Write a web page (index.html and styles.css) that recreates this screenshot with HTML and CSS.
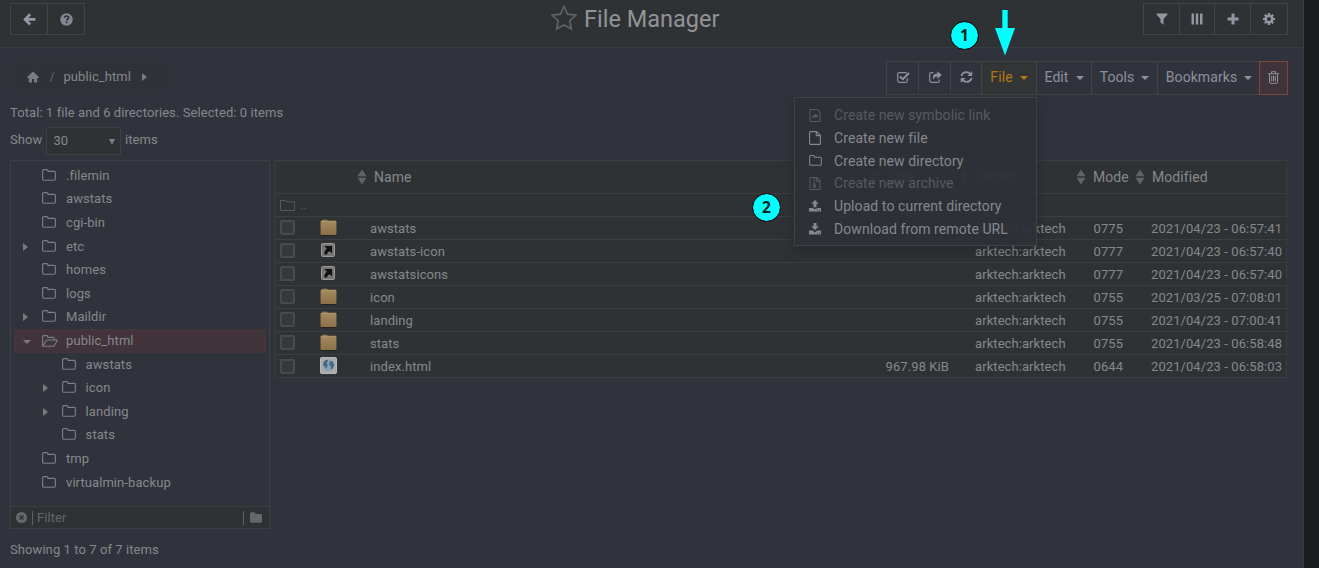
FILE: index.html
```html
<!DOCTYPE html>
<html lang="en">
<head>
<meta charset="utf-8">
<title>File Manager</title>
<link rel="stylesheet" href="styles.css">
</head>
<body>
<svg class="defs" width="0" height="0">
  <symbol id="folder" viewBox="0 0 14 12"><path d="M.6 9.8V2.1Q.6.6 2 .6h2.6Q6 .6 6 2v.4h6q1.4 0 1.4 1.4v6q0 1.5-1.4 1.5H2Q.6 11.300.6 9.800z" fill="none" stroke="currentColor" stroke-width="1.1"/></symbol>
  <symbol id="folder-open" viewBox="0 0 16 12"><path d="M.6 10V2Q.6.6 2 .6h2.500Q5.900.6 5.900 2v.4h5Q12.300 2.400 12.300 3.800v1M1 10.800l3.100-5q.5-.8 1.500-.8h9.200q.9 0 .4.8l-2.700 4.500q-.6 1-1.600 1H1.700Q.6 11.300.6 10" fill="none" stroke="currentColor" stroke-width="1.1"/></symbol>
  <symbol id="file" viewBox="0 0 12 14"><path d="M.6 1.300Q.6.6 1.300.6h6.200l3.900 3.900v8.200q0 .7-.7.700H1.300Q.6 13.400.6 12.700zM7.300.6v4h4.100" fill="none" stroke="currentColor" stroke-width="1.100"/></symbol>
  <symbol id="filelink" viewBox="0 0 12 14"><path d="M.6 1.300Q.6.6 1.300.6h7.200l2.900 2.900v9.200q0 .7-.7.700H1.300Q.6 13.400.6 12.700z" fill="none" stroke="currentColor" stroke-width="1.100"/><path d="M2.700 10.300q0-4.100 3.500-4.100V4.800l3.500 2.700-3.500 2.600V8.500q-2 0-3.500 1.800z" fill="currentColor"/></symbol>
  <symbol id="filezip" viewBox="0 0 12 14"><path d="M.6 1.300Q.6.6 1.300.6h6.700l3.400 3.400v8.700q0 .7-.7.700H1.300Q.6 13.400.6 12.700zM7.700.6v3.900h3.700" fill="none" stroke="currentColor" stroke-width="1.100"/><path d="M4 1h1.300v1H4zm1.300 1h1.300v1H5.300zM4 3h1.300v1H4zm1.300 1h1.300v1H5.300zM4 5h1.300v1H4z" fill="currentColor"/><path d="M4.500 6.500h1.600l1 3.600q0 1.700-1.800 1.700t-1.800-1.700zM4.700 9.300v1h1.300v-1z" fill="currentColor" fill-rule="evenodd"/></symbol>
  <symbol id="upload" viewBox="0 0 12 12"><path d="M6 0l3.700 3.800H7.500v3.400h-3V3.800H2.300z" fill="currentColor"/><path d="M0 8h3.800q.3 1 2.200 1t2.200-1H12v3.600H0zM8.400 9.800v.8h.8v-.8zm1.700 0v.8h.8v-.8z" fill="currentColor" fill-rule="evenodd"/></symbol>
  <symbol id="download" viewBox="0 0 12 12"><path d="M4.500 0h3v3.300h2.300L6 7.300 2.200 3.300h2.300z" fill="currentColor"/><path d="M0 7.600h3.700L6 9.600l2.300-2H12v4H0zM8.400 9.800v.8h.8v-.8zm1.700 0v.8h.8v-.8z" fill="currentColor" fill-rule="evenodd"/></symbol>
  <symbol id="sort" viewBox="0 0 10 16"><path d="M5 .5L9.500 7.200H.5zM.5 8.800h9L5 15.500z" fill="currentColor"/></symbol>
  <symbol id="bigfolder" viewBox="0 0 17 17"><path d="M1 2.500Q1 .5 2.500.5h4q1 0 1.500 1h7.500q1 0 1 1V16q0 .7-.7.700H1.400Q.5 16.700.5 16V2.500z" fill="#211f1b"/><path d="M2 2V1q0-.5.7-.5h4Q7.500.5 8 2z" fill="#85683d"/><rect x=".5" y="1.800" width="16" height="14.200" rx="1" fill="url(#tan)"/><path d="M1 2.300h15" stroke="#b39b73" stroke-width=".7"/></symbol>
  <linearGradient id="tan" x1="0" y1="0" x2="0" y2="1"><stop offset="0" stop-color="#a58b62"/><stop offset="1" stop-color="#8c7048"/></linearGradient>
  <symbol id="shortcut" viewBox="0 0 14 14"><rect x=".5" y=".5" width="13" height="13" rx="1" fill="#777" stroke="#999"/><path d="M3.300 3h7.800v7.500L8.700 8.200q-2.400.6-2.700 3.200H3.500q-.9-3 2.400-5.600z" fill="#111"/></symbol>
  <symbol id="globe" viewBox="0 0 17 17"><rect x=".5" y=".5" width="16" height="16" rx="1" fill="#aaa" stroke="#b8b8b8"/><circle cx="8.500" cy="8.300" r="5.800" fill="#87a0b3"/><path d="M3.500 5.200Q5.200 2.700 8 2.800L7.600 4.600 6.300 6l1.300 1.300-.3 1.600-1 2.800L4.900 9.500 3.200 7.900zM10 4l2.600.500 1.500 3-1 3.400-2.300 1.700.3-3.300L9.300 8l.2-2z" fill="#456587"/></symbol>
</svg>

<main class="page">
  <header class="header">
    <div class="group">
      <button class="btn back"><svg width="13" height="13" viewBox="0 0 13 13"><path d="M7.200 1.300L2.100 6.400l5.100 5.100M2.500 6.400h10" fill="none" stroke="currentColor" stroke-width="2.700"/></svg></button>
      <button class="btn help"><svg width="13" height="13" viewBox="0 0 13 13"><circle cx="6.500" cy="6.500" r="6.200" fill="currentColor"/><path d="M4.300 4.700Q4.700 3 6.600 3q2 0 2 1.700 0 1-1.100 1.600-.9.500-.9 1.300M6.600 8.600v1.600" fill="none" stroke="#2f3235" stroke-width="1.700"/></svg></button>
    </div>
    <h1 class="title"><svg width="26" height="26" viewBox="0 0 26 26"><path d="M13 1.500l3.500 7.600 8.300 1-6.100 5.600 1.600 8.200L13 19.900l-7.300 4 1.600-8.200L1.200 10.100l8.300-1z" fill="none" stroke="#606264" stroke-width="1.700"/></svg><span>File Manager</span></h1>
    <div class="group actions">
      <button class="btn"><svg width="12" height="12" viewBox="0 0 12 12"><path d="M.5.500h11v1L7.500 6v5.800l-3-2.400V6L.5 1.500z" fill="currentColor"/></svg></button>
      <button class="btn"><svg width="12" height="12" viewBox="0 0 12 12"><path d="M.5.500H3v11H.5zM4.800.500h2.400v11H4.800zM9 .500h2.500v11H9z" fill="currentColor"/></svg></button>
      <button class="btn"><svg width="12" height="12" viewBox="0 0 12 12"><path d="M6 .5v11M.5 6h11" stroke="currentColor" stroke-width="3"/></svg></button>
      <button class="btn"><svg width="12" height="12" viewBox="0 0 12 12"><circle cx="6" cy="6" r="3.300" fill="none" stroke="currentColor" stroke-width="2.600"/><path d="M6 0v2M6 10v2M0 6h2M10 6h2M1.800 1.800l1.400 1.400M8.800 8.800l1.400 1.400M1.800 10.200l1.400-1.400M8.800 3.200l1.400-1.400" stroke="currentColor" stroke-width="2.200"/></svg></button>
    </div>
  </header>

  <div class="topbar">
    <nav class="crumbs"><svg width="12" height="12" viewBox="0 0 13 12"><path d="M6.500 0L13 6.200l-.8.800H11v5H7.700V8.200H5.300V12H2V7H.8L0 6.200z" fill="currentColor"/></svg><span class="slash">/</span><span>public_html</span><i class="tri right"></i></nav>
    <div class="toolbar">
      <button class="tool t1"><svg width="13" height="12" viewBox="0 0 13 12"><path d="M10.300 7v2.800q0 1.500-1.500 1.500H2.200Q.7 11.300.7 9.800V3.200q0-1.500 1.500-1.500h6.600l1 .3" fill="none" stroke="currentColor" stroke-width="1.200"/><path d="M3 5.500l2.800 2.700L12 2" fill="none" stroke="currentColor" stroke-width="2"/></svg></button>
      <button class="tool t2"><svg width="13" height="12" viewBox="0 0 13 12"><path d="M4.500 1.700H2.200Q.7 1.700.7 3.200v6.600q0 1.500 1.500 1.500h6.600q1.500 0 1.500-1.500V8.500" fill="none" stroke="currentColor" stroke-width="1.200"/><path d="M8.300.2l4.500 3.900-4.500 3.800V5.600q-3.500-.2-3.300 3.100-1.900-2.200-.8-4.200 1-2 4.100-2z" fill="currentColor"/></svg></button>
      <button class="tool t3"><svg width="13" height="12" viewBox="0 0 13 12"><path d="M1.500 5Q2.300 1.400 6.400 1.200q2.500 0 4.200 2M11.500 7Q10.700 10.600 6.600 10.800q-2.500 0-4.200-2" fill="none" stroke="currentColor" stroke-width="1.800"/><path d="M12.200 0v5H7.500zM.8 12V7h4.700z" fill="currentColor"/></svg></button>
      <button class="tool t4">File<i class="tri down"></i></button>
      <button class="tool t5">Edit<i class="tri down"></i></button>
      <button class="tool t6">Tools<i class="tri down"></i></button>
      <button class="tool t7">Bookmarks<i class="tri down"></i></button>
      <button class="tool t8"><svg width="11" height="13" viewBox="0 0 11 13"><path d="M0 2.700h11M3.500 2.500V.7h4v1.800M1.500 3v8.200q0 1.200 1.200 1.200h5.600q1.200 0 1.200-1.200V3M3.700 4.700v5.800M5.500 4.700v5.800M7.300 4.700v5.800" fill="none" stroke="currentColor" stroke-width="1"/></svg></button>
      <div class="menu">
        <div class="item off"><svg class="ic" width="12" height="13"><use href="#filelink"/></svg>Create new symbolic link</div>
        <div class="item"><svg class="ic" width="12" height="14"><use href="#file"/></svg>Create new file</div>
        <div class="item"><svg class="ic" width="13" height="11"><use href="#folder"/></svg>Create new directory</div>
        <div class="item off"><svg class="ic" width="12" height="13"><use href="#filezip"/></svg>Create new archive</div>
        <div class="item"><svg class="ic" width="12" height="12"><use href="#upload"/></svg>Upload to current directory</div>
        <div class="item"><svg class="ic" width="12" height="12"><use href="#download"/></svg>Download from remote URL</div>
      </div>
    </div>
  </div>

  <p class="total">Total: 1 file and 6 directories. Selected: 0 items</p>
  <div class="show"><span>Show</span><div class="select"><span>30</span><i class="tri drop"></i></div><span>items</span></div>

  <div class="content">
    <aside class="side">
      <div class="tree">
        <div class="node"><i></i><svg class="fo"><use href="#folder"/></svg>.filemin</div>
        <div class="node"><i></i><svg class="fo"><use href="#folder"/></svg>awstats</div>
        <div class="node"><i></i><svg class="fo"><use href="#folder"/></svg>cgi-bin</div>
        <div class="node"><i class="tri right"></i><svg class="fo"><use href="#folder"/></svg>etc</div>
        <div class="node"><i></i><svg class="fo"><use href="#folder"/></svg>homes</div>
        <div class="node"><i></i><svg class="fo"><use href="#folder"/></svg>logs</div>
        <div class="node"><i class="tri right"></i><svg class="fo"><use href="#folder"/></svg>Maildir</div>
        <div class="node sel"><i class="tri down"></i><svg class="fo open"><use href="#folder-open"/></svg>public_html</div>
        <div class="node sub"><i></i><svg class="fo"><use href="#folder"/></svg>awstats</div>
        <div class="node sub"><i class="tri right"></i><svg class="fo"><use href="#folder"/></svg>icon</div>
        <div class="node sub"><i class="tri right"></i><svg class="fo"><use href="#folder"/></svg>landing</div>
        <div class="node sub"><i></i><svg class="fo"><use href="#folder"/></svg>stats</div>
        <div class="node"><i></i><svg class="fo"><use href="#folder"/></svg>tmp</div>
        <div class="node"><i></i><svg class="fo"><use href="#folder"/></svg>virtualmin-backup</div>
      </div>
      <div class="filter"><svg width="11" height="11" viewBox="0 0 11 11"><circle cx="5.500" cy="5.500" r="5.500" fill="currentColor"/><path d="M3.500 3.500l4 4M7.500 3.500l-4 4" stroke="#2f3235" stroke-width="1.500"/></svg><span class="field">Filter</span><svg width="12" height="11" viewBox="0 0 12 11"><path d="M0 1.500Q0 .3 1.300.3h2.900q1.200 0 1.200 1.200v.4h5.200Q12 1.900 12 3.200v6.100q0 1.400-1.400 1.400H1.400Q0 10.700 0 9.300z" fill="currentColor"/></svg></div>
    </aside>

    <section class="list">
      <div class="row head"><span></span><span></span><span class="h name"><svg class="sort"><use href="#sort"/></svg>Name</span><span class="h size"><svg class="sort"><use href="#sort"/></svg>Size</span><span class="h owner"><svg class="sort"><use href="#sort"/></svg>Owner</span><span class="h mode"><svg class="sort"><use href="#sort"/></svg>Mode</span><span class="h mod"><svg class="sort"><use href="#sort"/></svg>Modified</span></div>
      <div class="row up"><span class="parent"><svg width="15" height="11" viewBox="0 0 15 11"><path d="M.5.500h5l1 1.300h8v8.700H.5z" fill="none" stroke="currentColor"/></svg>..</span></div>
      <div class="row"><b class="cb"></b><svg class="fi"><use href="#bigfolder"/></svg><span>awstats</span><span class="sz"></span><span>arktech:arktech</span><span>0775</span><span>2021/04/23 - 06:57:41</span></div>
      <div class="row"><b class="cb"></b><svg class="fi sm"><use href="#shortcut"/></svg><span>awstats-icon</span><span class="sz"></span><span>arktech:arktech</span><span>0777</span><span>2021/04/23 - 06:57:40</span></div>
      <div class="row"><b class="cb"></b><svg class="fi sm"><use href="#shortcut"/></svg><span>awstatsicons</span><span class="sz"></span><span>arktech:arktech</span><span>0777</span><span>2021/04/23 - 06:57:40</span></div>
      <div class="row"><b class="cb"></b><svg class="fi"><use href="#bigfolder"/></svg><span>icon</span><span class="sz"></span><span>arktech:arktech</span><span>0755</span><span>2021/03/25 - 07:08:01</span></div>
      <div class="row"><b class="cb"></b><svg class="fi"><use href="#bigfolder"/></svg><span>landing</span><span class="sz"></span><span>arktech:arktech</span><span>0755</span><span>2021/04/23 - 07:00:41</span></div>
      <div class="row"><b class="cb"></b><svg class="fi"><use href="#bigfolder"/></svg><span>stats</span><span class="sz"></span><span>arktech:arktech</span><span>0755</span><span>2021/04/23 - 06:58:48</span></div>
      <div class="row"><b class="cb"></b><svg class="fi"><use href="#globe"/></svg><span>index.html</span><span class="sz">967.98 KiB</span><span>arktech:arktech</span><span>0644</span><span>2021/04/23 - 06:58:03</span></div>
    </section>
  </div>
  <p class="showing">Showing 1 to 7 of 7 items</p>
</main>

<div class="marker one">1</div>
<div class="marker two">2</div>
<svg class="arrow" width="20" height="46" viewBox="0 0 20 46"><path d="M7.300 0h5.400v18H20L10 45.500 0 18h7.300z" fill="#0ff"/></svg>
</body>
</html>
```
FILE: styles.css
```css
* { box-sizing: border-box; }
body { margin: 0; height: 568px; overflow: hidden; background: #1b1c20; color: #85888b; font: 13px/20px Roboto, sans-serif; letter-spacing: .08px; }
.defs { position: absolute; }
svg { display: block; flex: none; }
p, h1 { margin: 0; font-weight: 400; }
button { font: inherit; letter-spacing: inherit; color: inherit; background: none; border: 0; padding: 0; margin: 0; }
.page { width: 1304px; height: 568px; background: #30333c; border-right: 1px solid #3b3d41; }
.header { height: 48px; background: #2f3235; border-bottom: 1px solid #3a3c3e; display: grid; grid-template-columns: 1fr auto 1fr; padding: 3px 15px 0 10px; }
.group { display: flex; height: 32px; border: 1px solid #414447; justify-self: start; color: #9496a1; }
.actions { justify-self: end; }
.btn { width: 36px; display: flex; align-items: center; justify-content: center; border-left: 1px solid #414447; }
.btn:first-child { border-left: 0; }
.actions .btn:first-child { width: 35px; }
.actions .btn:nth-child(3) { width: 36px; }
.actions .btn:nth-child(2) { width: 35px; padding-right: 1px; }
.actions .btn:last-child { width: 37px; padding-right: 1px; }
.back { width: 36px; }
.help { width: 37px; color: #858793; }
.title { display: flex; gap: 7.5px; font-size: 23.5px; line-height: 32px; letter-spacing: 0; color: #929496; margin-left: -28px; }
.title svg { margin-top: 2px; }
.topbar { display: flex; justify-content: space-between; padding: 13px 15px 0 10px; height: 54px; }
.crumbs { display: flex; align-items: center; width: 160px; height: 31px; background: #2f3238; padding-left: 17px; }
.crumbs span { margin-right: 11px; }
.crumbs .slash { margin: 0 8.5px 0 11px; color: #66696c; }
.crumbs svg { color: #797e80; margin-left: -.5px; }
.tri { width: 0; height: 0; border: 4px solid transparent; flex: none; }
.tri.right { border-left: 5px solid #777b7e; border-right: 0; }
.tri.down { border-top: 4px solid currentColor; border-bottom: 0; }
.toolbar { position: relative; display: flex; height: 34px; font-size: 14px; letter-spacing: .08px; color: #8e919b; }
.tool { border: 1px solid #414447; border-right: 0; display: flex; align-items: center; justify-content: center; gap: 7px; padding-bottom: 2px; }
.tool .tri { margin-top: 2px; }
.t1, .t2 { width: 32px; padding-left: 1px; }
.t3 { width: 31px; }
.t4 { width: 55px; color: #b4780e; background: #333436; }
.t5 { width: 55px; }
.t6 { width: 66px; }
.t7 { width: 102px; padding-left: 1px; }
.t8 { width: 29px; border: 1px solid #82423d; background: #3e3439; }
.menu { position: absolute; z-index: 2; left: -92px; top: 36px; width: 243px; height: 149px; padding-top: 6px; background: rgba(46, 48, 56, .95); border: 1px solid #3f4143; box-shadow: 0 6px 12px rgba(0, 0, 0, .18); color: #85888c; }
.item { display: grid; grid-template-columns: 25px 1fr; align-items: center; height: 22.7px; padding-left: 14px; white-space: nowrap; }
.off { color: #575a60; }
.total { padding: 1px 0 0 10px; }
.show { display: flex; align-items: center; height: 28px; padding-left: 10px; margin-top: 4px; }
.show > span { margin-top: -3px; }
.select { display: flex; align-items: center; justify-content: space-between; width: 75px; height: 28px; margin: 0 3.5px 0 4px; padding: 0 5px 0 6px; border: 1px solid #3d4043; background: #2f3235; }
.drop { border-width: 6px 3px 0; border-top-color: #7c7e7f; margin-top: 2px; }
.content { display: flex; align-items: flex-start; gap: 5px; padding-left: 10px; margin-top: 5px; }
.side { width: 260px; height: 369px; border: 1px solid #3c3f43; display: flex; flex-direction: column; }
.tree { flex: 1; padding: 3px 3px 0; }
.node { display: flex; align-items: center; height: 23.6px; }
.node > i:first-child { width: 0; margin: 2px 17px 0 9px; }
.node > i.right { width: 5px; margin-top: 0; margin-right: 14px; }
.node > i:first-child:not(.tri) { width: 5px; margin-right: 14px; }
.node > i.down { width: 8px; margin-right: 11px; }
.sub { padding-left: 19.6px; }
.fo { width: 14px; height: 12px; margin: -2px 10px 0 0; color: #7c8084; }
.fo.open { width: 16px; margin: 0 8px 0 0; }
.sel { background: #41343b; }
.sel .tri { color: #787b7e; }
.filter { display: flex; align-items: center; height: 22px; border-top: 1px solid #3c3f42; background: #2f3235; color: #65686a; padding: 0 7px 0 5px; }
.field { flex: 1; height: 14px; line-height: 13px; margin: 0 6px 0 5px; padding-left: 4px; border: solid #5d6061; border-width: 0 1px; }
.list { width: 1012px; height: 218px; border: 1px solid #3b3d41; background: #2f3235; }
.row { display: grid; grid-template-columns: 44px 50px 505px 100px 118.500px 57.500px 1fr; align-items: center; height: 23px; border-bottom: 1px solid #3b3e40; white-space: nowrap; }
.row > span { padding-top: 2px; }
.row:last-child { border-bottom: 0; }
.row:last-child > span { padding-top: 1px; }
.head { height: 33px; font-size: 14px; }
.head > span { padding-top: 0; }
.up > .parent { padding-top: 0; }
.h { display: flex; align-items: center; }
.sort { width: 10px; height: 16px; margin-right: 7px; color: #606264; }
.name { margin-left: -13px; }
.size { margin-left: -5px; }
.owner { margin-left: -16px; }
.mode { margin-left: -17.500px; }
.mod { margin-left: -16px; }
.parent { display: flex; align-items: center; gap: 5px; padding-left: 4px; color: #55585a; grid-column: 1 / 4; }
.cb { width: 15px; height: 15px; margin: -1px 0 0 4px; border: 2px solid #484b4d; border-radius: 2px; background: #36393c; }
.fi { width: 17px; height: 17px; margin: -2px 0 0 -.5px; }
.fi.sm { width: 14px; height: 14px; margin-left: 1px; }
.row:last-child .fi { margin-top: -3px; }
.sz { text-align: right; padding-right: 26px; }
.showing { padding: 11px 0 0 10px; }
.marker { position: absolute; z-index: 3; width: 29px; height: 29px; border: 1px solid #04100f; border-radius: 50%; background: #0ff; background-clip: padding-box; color: #062022; font: 700 15.5px/26px "Noto Sans", sans-serif; text-align: center; letter-spacing: 0; }
.one { left: 950px; top: 21px; }
.two { left: 752px; top: 193px; }
.arrow { position: absolute; left: 995px; top: 10px; z-index: 3; }
```
